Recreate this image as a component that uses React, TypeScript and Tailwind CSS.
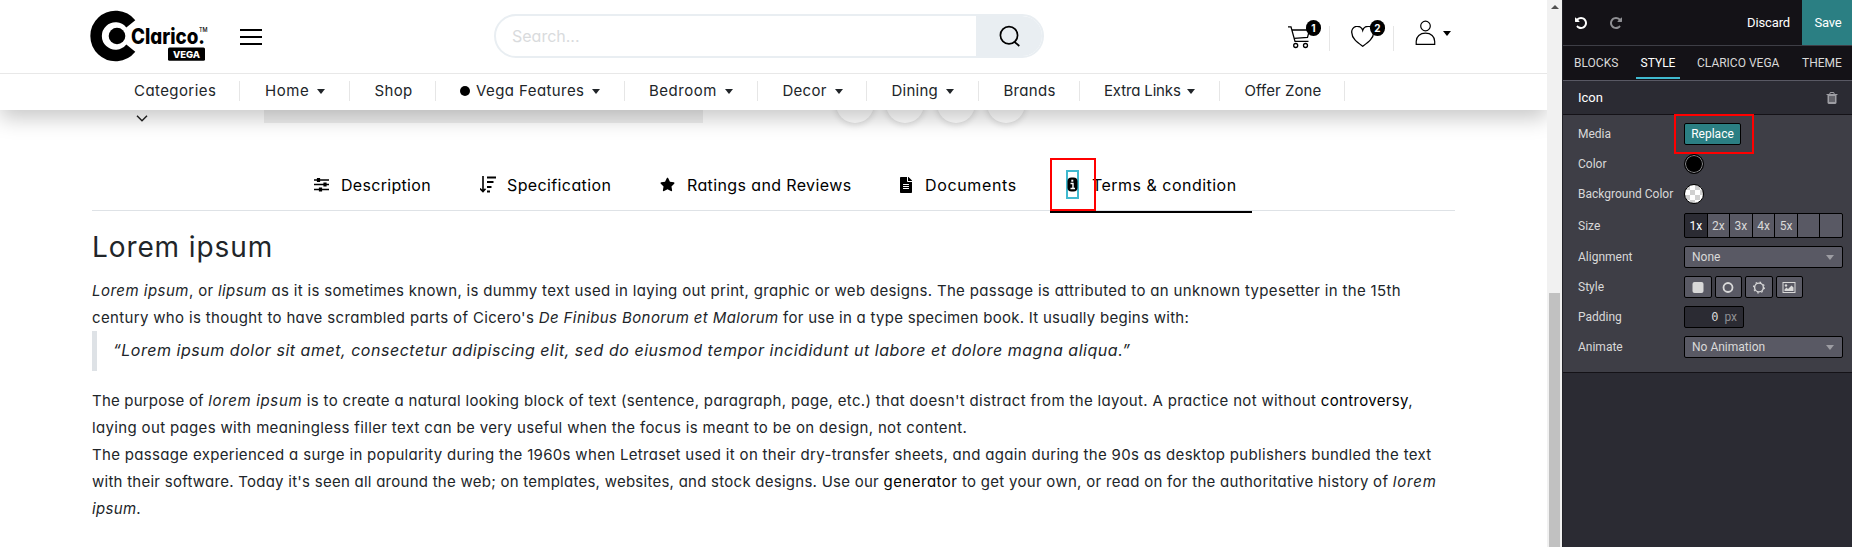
import React from 'react';
import { FaStar, FaFileAlt } from 'react-icons/fa';

const UNDO =
  'M1664 896q0 156-61 298t-164 245-245 164-298 61q-172 0-327-72.5t-264-204.5q-7-10-6.5-22.5t8.5-20.5l137-138q10-9 25-9 16 2 23 12 73 95 179 147t225 52q104 0 198.5-40.5t163.5-109.5 109.5-163.5 40.5-198.5-40.5-198.5-109.5-163.5-163.5-109.5-198.5-40.5q-98 0-188 35.5t-160 101.5l137 138q31 30 14 69-17 40-59 40h-448q-26 0-45-19t-19-45v-448q0-42 40-59 39-17 69 14l130 129q107-101 244.5-156.5t284.5-55.5q156 0 298 61t245 164 164 245 61 298z';
const TRASH =
  'M704 1376v-704q0-14-9-23t-23-9h-64q-14 0-23 9t-9 23v704q0 14 9 23t23 9h64q14 0 23-9t9-23zm256 0v-704q0-14-9-23t-23-9h-64q-14 0-23 9t-9 23v704q0 14 9 23t23 9h64q14 0 23-9t9-23zm256 0v-704q0-14-9-23t-23-9h-64q-14 0-23 9t-9 23v704q0 14 9 23t23 9h64q14 0 23-9t9-23zm-544-992h448l-48-117q-7-9-17-11h-317q-10 2-17 11zm928 32v64q0 14-9 23t-23 9h-96v948q0 83-47 143.5t-113 60.5h-832q-66 0-113-58.5t-47-141.5v-952h-96q-14 0-23-9t-9-23v-64q0-14 9-23t23-9h309l70-167q15-37 54-63t79-26h320q40 0 79 26t54 63l70 167h309q14 0 23 9t9 23z';

function Caret({ className = '' }: { className?: string }) {
  return <span className={`inline-block border-x-[4.5px] border-t-[5px] border-x-transparent border-t-current ${className}`} />;
}

function Logo() {
  return (
    <svg width="122" height="56" viewBox="0 0 122 56" className="block overflow-visible">
      <path d="M40.8 13.8 A19.5 19.5 0 1 0 40.8 38.2" fill="none" stroke="#000" strokeWidth="11.5" />
      <circle cx="27" cy="26" r="8.3" />
      <text x="41" y="33.5" fontFamily="Inter, sans-serif" fontWeight="800" fontSize="21" textLength="74" stroke="#fff" strokeWidth="2.5" paintOrder="stroke" lengthAdjust="spacingAndGlyphs">Clarico.</text>
      <text x="109" y="21.500" fontFamily="Inter, sans-serif" fontWeight="500" fontSize="5.5" textLength="8.5">TM</text>
      <rect x="78" y="37.5" width="37" height="13.2" rx="1.5" />
      <text x="83" y="47.5" fontFamily="Inter, sans-serif" fontWeight="800" fontSize="9.5" fill="#fff" textLength="27">VEGA</text>
    </svg>
  );
}

const nav: { label: string; w: string; text: string; caret?: boolean; dot?: boolean }[] = [
  { label: 'Categories', w: 'w-[131px] pl-[25px]', text: 'w-[82px] tracking-[0.42px]' },
  { label: 'Home', w: 'w-[110px] pl-[25px]', text: 'w-[52px] tracking-[0.6px]', caret: true },
  { label: 'Shop', w: 'w-[86px] pl-[24.500px]', text: 'w-[38px] tracking-[0.33px]' },
  { label: 'Vega Features', w: 'w-[189px] pl-[24px]', text: 'w-[116px] tracking-[0.42px]', caret: true, dot: true },
  { label: 'Bedroom', w: 'w-[133px] pl-[24px]', text: 'w-[76px] tracking-[0.5px]', caret: true },
  { label: 'Decor', w: 'w-[109px] pl-[24.500px]', text: 'w-[52px] tracking-[0.25px]', caret: true },
  { label: 'Dining', w: 'w-[112px] pl-[24.500px]', text: 'w-[54px] tracking-[0.25px]', caret: true },
  { label: 'Brands', w: 'w-[101px] pl-[24.500px]', text: 'w-[52px] tracking-[0.3px]' },
  { label: 'Extra Links', w: 'w-[140px] pl-[24px]', text: 'w-[83px] tracking-[-0.15px]', caret: true },
  { label: 'Offer Zone', w: 'w-[125px] pl-[24.500px]', text: 'w-[77px] tracking-[0.05px]' },
];

function Badge({ n }: { n: number }) {
  return (
    <span className="absolute -top-[6px] left-[19px] flex h-4 w-[15px] items-center justify-center rounded-full bg-black text-[10px] font-bold text-white">{n}</span>
  );
}

function Header() {
  return (
    <header className="relative z-10 h-[110px] shrink-0 bg-white shadow-[0_8px_20px_rgba(0,0,0,0.22)]">
      <div className="flex h-[73px] items-start pl-[90px]">
        <div className="h-[66px] w-[118px] pt-[10px]"><Logo /></div>
        <div className="ml-8 mt-[29px] flex w-[22px] flex-col gap-[5px]">
          <i className="h-[2px] bg-black" /><i className="h-[2px] bg-black" /><i className="h-[2px] bg-black" />
        </div>
        <div className="ml-[232px] mt-[14px] flex h-11 w-[550px] overflow-hidden rounded-full border-2 border-[#e9eef2] bg-white">
          <span className="flex flex-1 items-center pl-4 text-base text-[#d9dbdd]">Search...</span>
          <span className="flex w-[66px] items-center justify-center bg-[#e9eef2] pl-px">
            <svg width="22" height="22" viewBox="0 0 22 22" fill="none" stroke="#000" strokeWidth="1.7"><circle cx="10" cy="10.3" r="8.6" /><path d="M15 16.5 20.3 21" /></svg>
          </span>
        </div>
        <div className="ml-[243px] mt-[26px] flex items-start">
          <div className="relative h-[25px] w-[43px] border-r border-[#e6e6e6]">
            <svg width="24" height="23" viewBox="0 0 24 23" fill="none" stroke="#000" strokeWidth="1.3"><path d="M1 .8H4L8 15.3H21.5M5.2 4H22.5L20.5 11.3 7.2 12.3" /><circle cx="8.7" cy="19.5" r="2" /><circle cx="18.5" cy="19.5" r="2" /></svg>
            <Badge n={1} />
          </div>
          <div className="relative ml-[21px] h-[25px] w-[43px] border-r border-[#e6e6e6]">
            <svg width="24" height="22" viewBox="0 0 24 22" fill="none" stroke="#000" strokeWidth="1.3"><path d="M11.7 20.3C6 16 .8 12.2.8 6.8A5.6 5.6 0 0 1 11.7 4.3 5.6 5.6 0 0 1 22.6 6.8C22.6 12.2 17.4 16 11.7 20.3Z" /></svg>
            <Badge n={2} />
          </div>
          <div className="-mt-[6px] ml-[21px] flex">
            <svg width="21" height="26" viewBox="0 0 21 26" fill="none" stroke="#000" strokeWidth="1.2"><circle cx="10.5" cy="6" r="4.8" /><path d="M1.2 24.3V21.5C1.2 16.5 5 13.2 10.5 13.2S19.7 16.5 19.7 21.5V24.3Z" /></svg>
            <Caret className="ml-[7px] mt-[11px]" />
          </div>
        </div>
      </div>
      <nav className="flex h-[37px] border-t border-[#e8e8e8] pl-[109px] pt-[7px] text-[15px] text-[#212529]">
        {nav.map((n) => (
          <div key={n.label} className={`flex h-5 items-center border-r border-[#e6e6e6] ${n.w}`}>
            {n.dot && <i className="mr-[6px] size-[10px] shrink-0 rounded-full bg-black" />}
            <span className={`shrink-0 whitespace-nowrap ${n.text}`}>{n.label}</span>
            {n.caret && <Caret className="mt-px" />}
          </div>
        ))}
      </nav>
    </header>
  );
}

const SlidersIcon = () => (
  <svg width="15" height="15" viewBox="0 0 15 15" stroke="#000" strokeWidth="1.5"><path d="M0 3H15M0 7.5H15M0 12.5H15" /><path d="M4.5 1V5M11 5.5V9.5M6.5 10.5V14.5" strokeWidth="3.2" /></svg>
);
const SortIcon = () => (
  <svg width="16" height="17" viewBox="0 0 16 17" stroke="#000" fill="none" strokeWidth="1.6"><path d="M3 0V15M0 12.5 3 15.6 5.5 12.8" /><path d="M7 1.5H16M7 6H13.5M7 11H11.5M7 15.5H10" strokeWidth="2" /></svg>
);
const InfoIcon = () => (
  <span className="relative -mt-px flex h-[29px] w-[13px] items-center justify-center border-2 border-[#40b9cf]">
    <svg width="11" height="15" viewBox="0 0 11 15" className="shrink-0"><rect x=".5" y=".5" width="10" height="14" rx="4" /><path d="M3.5 6.5H6V11M3.5 11.5H8" stroke="#fff" strokeWidth="1.4" fill="none" /><rect x="4.3" y="2.7" width="2" height="2" fill="#fff" /></svg>
  </span>
);

const tabs = [
  { label: 'Description', icon: <SlidersIcon />, w: 'w-[148px] tracking-[0.31px]', active: false },
  { label: 'Specification', icon: <SortIcon />, w: 'w-[162px] tracking-[0.38px]', active: false },
  { label: 'Ratings and Reviews', icon: <FaStar size={15} />, w: 'w-[220px] tracking-[0.38px]', active: false },
  { label: 'Documents', icon: <FaFileAlt size={16} />, w: 'w-[150px] tracking-[0.65px]', active: false },
  { label: 'Terms & condition', icon: <InfoIcon />, w: 'w-[202px] tracking-[0.48px]', active: true },
];

function Article() {
  return (
    <article className="whitespace-nowrap pl-[92px] text-[15px] leading-[27px] text-[#212529]">
      <h2 className="mb-[13px] mt-[17px] text-[28px] leading-[34px] tracking-[0.9px]">Lorem ipsum</h2>
      <p className="tracking-[0.327px]"><i className="tracking-[0.487px]">Lorem ipsum</i>, or <i className="tracking-[0.4px]">lipsum</i> as it is sometimes known, is dummy text used in laying out print, graphic or web designs. The passage is attributed to an unknown typesetter in the 15th</p>
      <p className="tracking-[0.345px]">century who is thought to have scrambled parts of Cicero's <i className="tracking-[0.4px]">De Finibus Bonorum et Malorum</i><span className="tracking-[0.275px]"> for use in a type specimen book. It usually begins with:</span></p>
      <blockquote className="mb-4 h-10 border-l-[5px] border-[#dee2e6] pl-4 text-base leading-[39px] tracking-[0.53px]"><i>“Lorem ipsum dolor sit amet, consectetur adipiscing elit, sed do eiusmod tempor incididunt ut labore et dolore magna aliqua.”</i></blockquote>
      <p className="tracking-[0.334px]"><span className="tracking-[0.2px]">The purpose of </span><i className="tracking-[0.65px]">lorem ipsum</i> is to create a natural looking block of text (sentence, paragraph, page, etc.) that doesn't distract from the layout. A practice not without <span className="text-black">controversy</span>,</p>
      <p className="tracking-[0.347px]">laying out pages with meaningless filler text can be very useful when the focus is meant to be on design, not content.</p>
      <p className="tracking-[0.32px]">The passage experienced a surge in popularity during the 1960s when Letraset used it on their dry-transfer sheets, and again during the 90s as desktop publishers bundled the text</p>
      <p className="tracking-[0.255px]">with their software. Today it's seen all around the web; on templates, websites, and stock designs. Use our <span className="tracking-[0.497px] text-black">generator</span><span className="tracking-[0.29px]"> to get your own, or read on for the authoritative history of </span><i className="tracking-[0.8px]">lorem</i></p>
      <p><i className="tracking-[0.32px]">ipsum</i>.</p>
    </article>
  );
}

function Site() {
  return (
    <main className="flex w-[1547px] flex-col overflow-hidden bg-white [font-family:Inter,sans-serif] [font-feature-settings:'cv11']">
      <Header />
      <div className="flex h-[13px] items-start">
        <div className="flex w-[264px] justify-center pl-[20px] pt-[5px]">
          <svg width="12" height="7" viewBox="0 0 12 7" fill="none" stroke="#222" strokeWidth="1.5"><path d="M1 .8 6 5.8 11 .8" /></svg>
        </div>
        <div className="h-[13px] w-[439px] bg-[#eeeeee]" />
        <div className="-mt-[25px] ml-[133px] flex gap-[12.3px]">
          {[0, 1, 2, 3].map((i) => <i key={i} className="size-[38px] rounded-full bg-white shadow-[0_2px_6px_rgba(0,0,0,0.14)]" />)}
        </div>
      </div>
      <div className="ml-[92px] mt-[35px] flex h-[53px] w-[1363px] items-start border-b border-[#dee2e6] pl-[206px]">
        <div className="flex h-[55px] shrink-0 gap-[18px] text-base text-black">
          {tabs.map((t) => (
            <div key={t.label} className={`flex h-[55px] items-center whitespace-nowrap border-b-2 pl-4 ${t.active ? 'border-black' : 'border-transparent'} ${t.w}`}>
              <span className={`flex shrink-0 ${t.active ? 'w-[26px]' : 'w-[27px]'}`}>{t.icon}</span>
              {t.label}
            </div>
          ))}
        </div>
      </div>
      <div className="h-[2px] shrink-0" />
      <Article />
    </main>
  );
}

function Row({ label, h = 'h-[22px]', children }: { label: string; h?: string; children: React.ReactNode }) {
  return (
    <div className={`flex items-center ${h}`}>
      <span className="w-[106px] shrink-0 whitespace-nowrap">{label}</span>
      {children}
    </div>
  );
}

function Select({ value }: { value: string }) {
  return (
    <span className="flex h-[22px] w-[159px] items-center justify-between rounded-[2px] border border-black bg-[#595964] pl-[7px] pr-[8px]">
      {value}
      <Caret className="border-x-[4px] border-t-[4px] text-[#9d9da3]" />
    </span>
  );
}

const styleIcons = [
  <rect key="a" x="2.5" y="2" width="11" height="11" rx="2" fill="#d9d9d9" />,
  <circle key="b" cx="8" cy="7.5" r="4.5" fill="none" stroke="#d9d9d9" strokeWidth="1.8" />,
  <g key="c" fill="none" stroke="#d9d9d9"><circle cx="8" cy="7.5" r="4.4" strokeWidth="1.4" /><circle cx="8" cy="7.5" r="5.4" strokeWidth="1.2" strokeDasharray="1.6 2.64" /></g>,
  <g key="d" fill="#d9d9d9"><rect x="2" y="2.5" width="12" height="10" fill="none" stroke="#d9d9d9" /><circle cx="5" cy="5.5" r="1.2" /><path d="M3.5 11V9.5L5.5 7.5 7 9 10.5 5.5 12.5 7.5V11Z" /></g>,
];

function Panel() {
  return (
    <aside className="relative flex h-[547px] w-[289px] flex-col bg-[#2b2b33] text-xs text-[#d9d9d9] [font-family:Roboto,sans-serif]">
      <div className="flex h-[46px] items-center border-b border-[#3e3e46] bg-[#141217] pl-[11px] text-[13px] text-white">
        <svg width="14" height="14" viewBox="0 0 1792 1792" fill="#fff"><path d={UNDO} /></svg>
        <svg width="14" height="14" viewBox="0 0 1792 1792" fill="#8f8f93" className="ml-[21px] -scale-x-100"><path d={UNDO} /></svg>
        <span className="ml-[124px] w-[55px] tracking-[-0.12px]">Discard</span>
        <span className="flex h-[45px] w-[50px] items-center justify-center bg-[#2b7f83] pl-[2px] tracking-[-0.2px]">Save</span>
      </div>
      <div className="flex h-[35px] border-b border-[#595964] bg-[#141217] leading-[34px]">
        <span className="w-[73px] pl-[11px]">BLOCKS</span>
        <span className="flex h-[33px] w-11 justify-center border-b-2 border-[#40b9cf] text-white">STYLE</span>
        <span className="w-[105px] whitespace-nowrap pl-[17px]">CLARICO VEGA</span>
        <span className="pl-[17px]">THEME</span>
      </div>
      <div className="flex h-[34px] items-center justify-between border-b border-[#141217] pl-[15px] pr-[13px] text-[13px] text-white">
        Icon
        <svg width="14" height="14" viewBox="0 0 1792 1792" fill="#9d9da3"><path d={TRASH} /></svg>
      </div>
      <div className="flex h-[258px] flex-col gap-2 border-b border-[#141217] bg-[#3e3e46] pl-[15px] pt-2">
        <Row label="Media"><span className="flex h-[22px] w-[57px] items-center justify-center rounded-[2px] border border-black bg-[#2b7f83] text-white">Replace</span></Row>
        <Row label="Color"><i className="size-5 rounded-full border border-black bg-black shadow-[inset_0_0_0_1px_#8f8f93]" /></Row>
        <Row label="Background Color"><i className="size-5 rounded-full border border-black bg-[conic-gradient(#fff_25%,#d0d0d0_0_50%,#fff_0_75%,#d0d0d0_0)] bg-[length:10px_10px]" /></Row>
        <Row label="Size" h="h-[25px]">
          <span className="grid h-[25px] w-[159px] grid-cols-7 gap-px overflow-hidden rounded-[2px] border border-black bg-black text-center leading-[24px]">
            {['1x', '2x', '3x', '4x', '5x', '', ''].map((s, i) => <span key={i} className={i === 0 ? 'bg-[#2b2b33] text-white' : 'bg-[#595964]'}>{s}</span>)}
          </span>
        </Row>
        <Row label="Alignment"><Select value="None" /></Row>
        <Row label="Style">
          <span className="flex gap-[3px]">
            {styleIcons.map((g, i) => <span key={i} className="flex h-[22px] w-[27.5px] items-center justify-center rounded-[2px] border border-black bg-[#595964]"><svg width="16" height="15" viewBox="0 0 16 15">{g}</svg></span>)}
          </span>
        </Row>
        <Row label="Padding">
          <span className="flex h-[22px] w-[60px] items-center justify-end gap-[6px] rounded-[2px] border border-black bg-[#2b2b33] pr-[6px]"><span className="[font-family:'DejaVu_Sans_Mono',monospace]">0</span><span className="text-[#8f8f93]">px</span></span>
        </Row>
        <Row label="Animate"><Select value="No Animation" /></Row>
      </div>
      <div className="absolute left-[111px] top-[114px] h-10 w-20 border-2 border-[#ff0000]" />
    </aside>
  );
}

export default function App() {
  return (
    <div className="relative flex h-[547px] w-[1852px] overflow-hidden">
      <Site />
      <div className="flex w-[16px] flex-col items-center border-r border-[#222228] bg-[#f1f1f1] pt-[5px]">
        <i className="border-x-[4px] border-b-[4px] border-x-transparent border-b-[#505050]" />
        <i className="mt-[284px] w-[11px] flex-1 bg-[#c1c1c1]" />
      </div>
      <Panel />
      <div className="absolute left-[1050px] top-[158px] h-[53px] w-[46px] border-2 border-[#ff0000]" />
    </div>
  );
}
